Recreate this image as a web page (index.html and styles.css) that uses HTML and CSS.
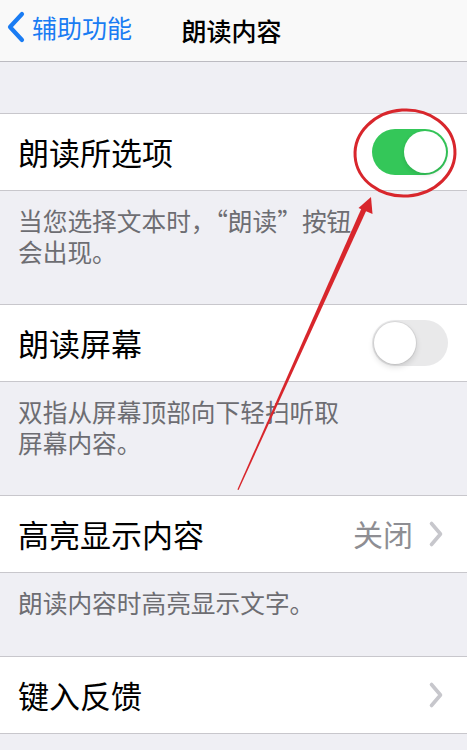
FILE: index.html
```html
<!DOCTYPE html>
<html lang="zh-CN">
<head>
<meta charset="utf-8">
<title>朗读内容</title>
<link rel="stylesheet" href="styles.css">
</head>
<body>
<div class="screen">
  <header class="nav">
    <a class="nav-back">
      <svg class="nav-chevron" viewBox="0 0 18 32" width="18" height="32">
        <path d="M15 3 L3 16 L15 29" fill="none" stroke="currentColor" stroke-width="4.2" stroke-linecap="round" stroke-linejoin="round"/>
      </svg>
      <span>辅助功能</span>
    </a>
    <h1 class="nav-title">朗读内容</h1>
  </header>

  <div class="spacer"></div>

  <section class="group">
    <div class="row">
      <span class="row-label">朗读所选项</span>
      <span class="switch on"><span class="knob"></span></span>
    </div>
  </section>
  <div class="footer footer-tall">
    <span class="footer-line">当您选择文本时，“朗读”按钮</span>
    <span class="footer-line">会出现。</span>
  </div>

  <section class="group">
    <div class="row">
      <span class="row-label">朗读屏幕</span>
      <span class="switch"><span class="knob"></span></span>
    </div>
  </section>
  <div class="footer footer-tall">
    <span class="footer-line">双指从屏幕顶部向下轻扫听取</span>
    <span class="footer-line">屏幕内容。</span>
  </div>

  <section class="group">
    <div class="row">
      <span class="row-label">高亮显示内容</span>
      <span class="row-value">关闭</span>
      <svg class="disclosure" viewBox="0 0 16 28" width="16" height="28">
        <path d="M3.5 3.5 L12.5 14 L3.5 24.5" fill="none" stroke="currentColor" stroke-width="3.6" stroke-linecap="round" stroke-linejoin="round"/>
      </svg>
    </div>
  </section>
  <div class="footer footer-short">
    <span class="footer-line">朗读内容时高亮显示文字。</span>
  </div>

  <section class="group">
    <div class="row">
      <span class="row-label">键入反馈</span>
      <span class="row-value"></span>
      <svg class="disclosure" viewBox="0 0 16 28" width="16" height="28">
        <path d="M3.5 3.5 L12.5 14 L3.5 24.5" fill="none" stroke="currentColor" stroke-width="3.6" stroke-linecap="round" stroke-linejoin="round"/>
      </svg>
    </div>
  </section>

  <!-- red hand-drawn annotation: circle round the switch and an arrow pointing at it -->
  <svg class="markup" viewBox="0 0 467 750" width="467" height="750">
    <ellipse cx="405" cy="153" rx="50" ry="43" fill="none" stroke="#d8262c" stroke-width="3" transform="rotate(-4 405 153)"/>
    <polygon points="237.4,489.5 238.6,490 367.5,208 362.5,206" fill="#d8262c"/>
    <polygon points="371,197 358.5,208 372.5,214" fill="#d8262c"/>
  </svg>
</div>
</body>
</html>
```

FILE: styles.css
```css
* {
  box-sizing: border-box;
}

html, body {
  margin: 0;
  padding: 0;
}

body {
  background: #efeff4;
  font-family: "Noto Sans CJK SC", "Noto Sans", sans-serif;
  color: #000;
}

.screen {
  position: relative;
  width: 467px;
  height: 750px;
  overflow: hidden;
}

/* navigation bar */
.nav {
  position: relative;
  height: 62px;
  background: #f9f9f9;
  border-bottom: 1px solid #bcbbc1;
  display: flex;
  align-items: center;
  justify-content: center;
}

.nav-back {
  position: absolute;
  left: 7px;
  top: 11px;
  display: flex;
  align-items: center;
  gap: 7px;
  color: #1a7cf3;
  font-size: 25px;
  line-height: 32px;
}

.nav-chevron {
  display: block;
}

.nav-title {
  margin: 0 0 2px -4px;
  font-size: 25px;
  font-weight: 500;
  line-height: 32px;
}

.spacer {
  height: 51px;
}

/* grouped table rows */
.group {
  background: #fff;
  border-top: 1px solid #c8c7cc;
  border-bottom: 1px solid #c8c7cc;
}

.row {
  height: 76px;
  display: flex;
  align-items: center;
  padding: 0 19px 0 18px;
}

.row-label {
  flex: 1;
  font-size: 31px;
  line-height: 40px;
  margin-top: -1px;
}

.row-value {
  font-size: 30px;
  color: #8e8e93;
  margin-right: 15px;
  margin-top: -3px;
}

.disclosure {
  color: #c7c7cc;
  display: block;
  margin-right: 4px;
}

/* switches */
.switch {
  position: relative;
  width: 76px;
  height: 46px;
  border-radius: 23px;
  background: #e9e9ea;
}

.switch .knob {
  position: absolute;
  top: 2px;
  left: 2px;
  width: 42px;
  height: 42px;
  border-radius: 50%;
  background: #fff;
  box-shadow: 0 0 0 1px rgba(0, 0, 0, 0.06), 0 3px 6px rgba(0, 0, 0, 0.14);
}

.switch.on {
  background: #34c759;
}

.switch.on .knob {
  left: 32px;
  box-shadow: 0 2px 5px rgba(0, 0, 0, 0.12);
}

/* section footers */
.footer {
  display: flex;
  flex-direction: column;
  gap: 3px;
  padding: 15px 18px 0;
  font-size: 24.7px;
  line-height: 28px;
  color: #6d6d72;
}

.footer-tall {
  height: 113px;
}

.footer-short {
  height: 83px;
}

/* annotation layer drawn over the list */
.markup {
  position: absolute;
  left: 0;
  top: 0;
  pointer-events: none;
}
```
